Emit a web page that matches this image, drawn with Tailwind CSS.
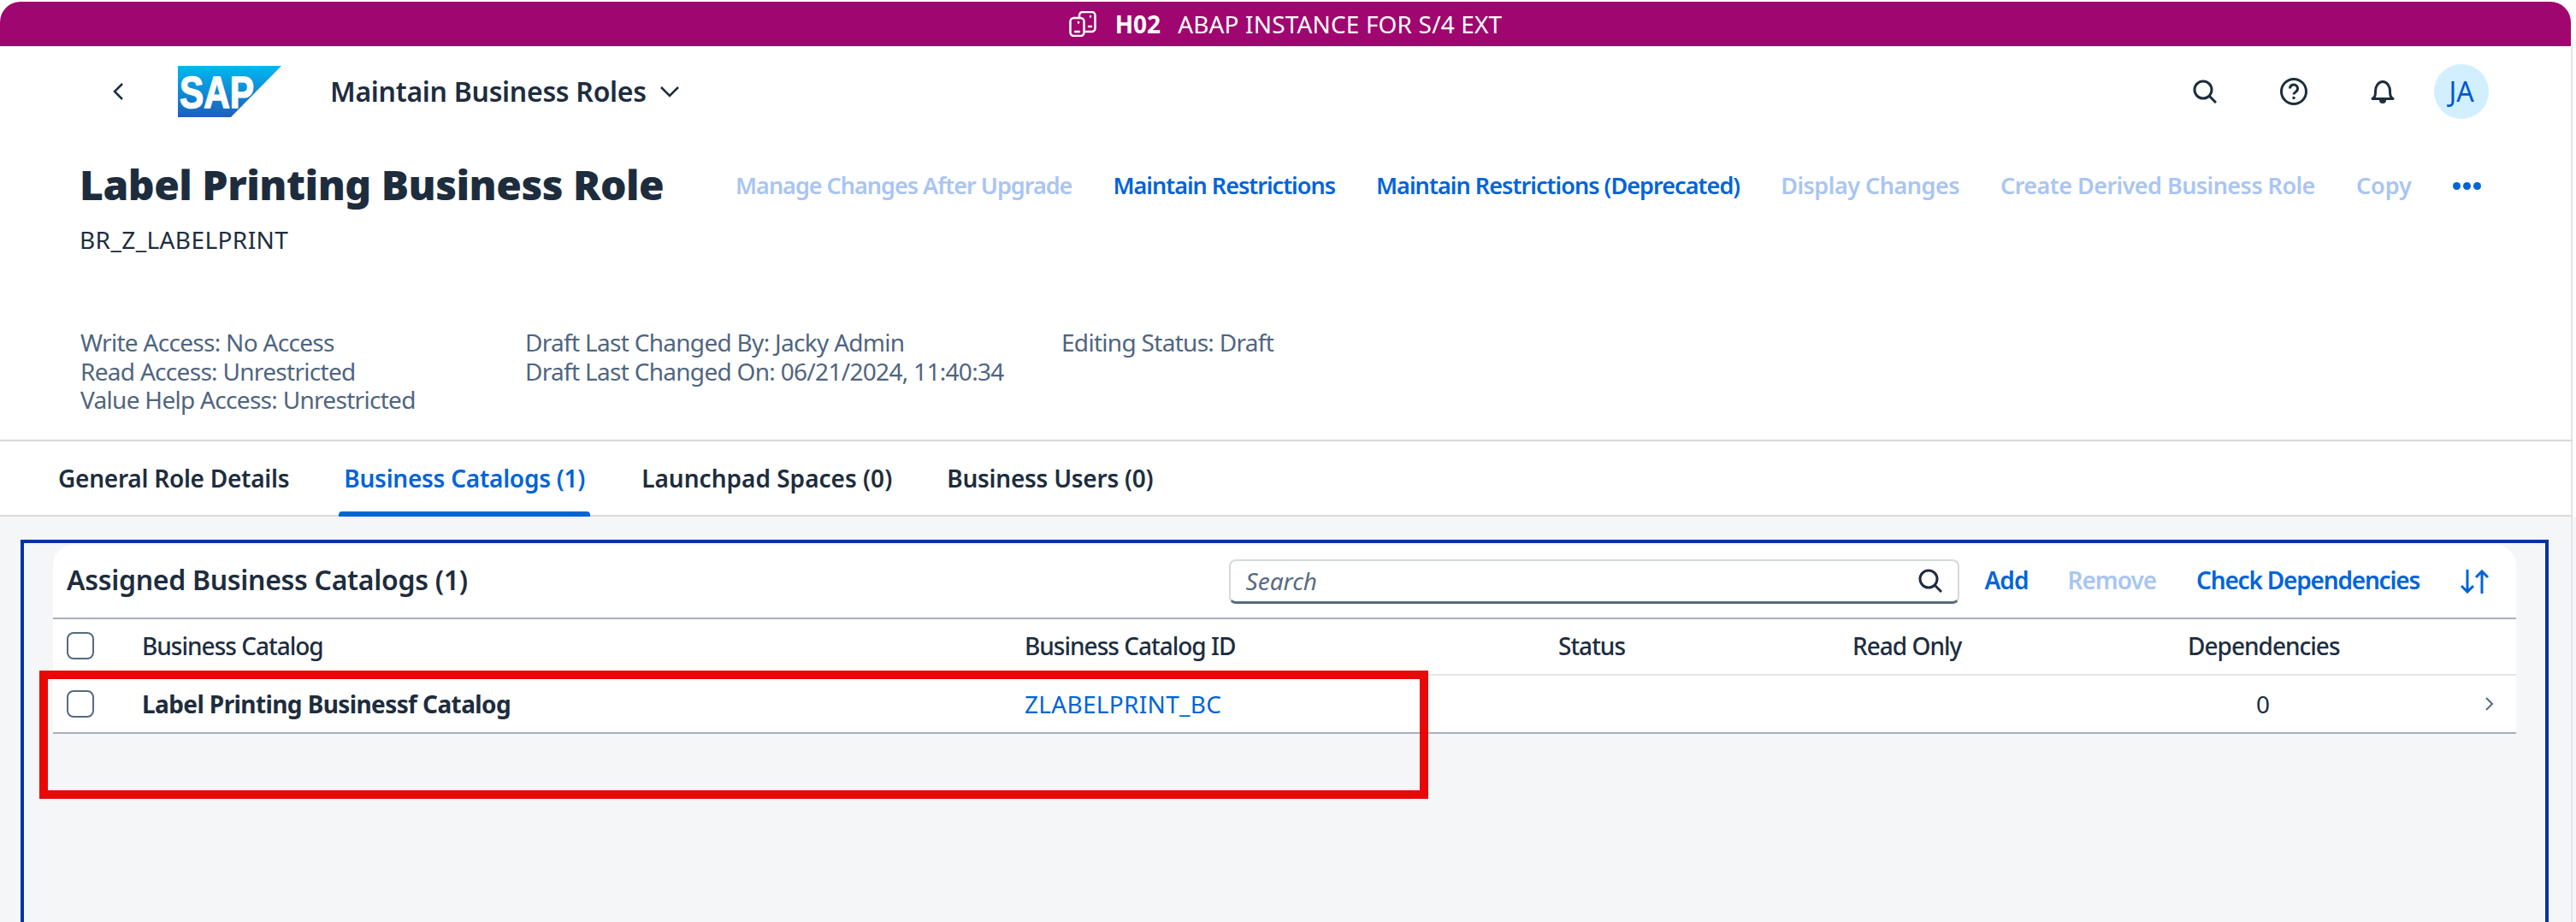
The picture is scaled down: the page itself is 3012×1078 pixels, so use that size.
<!DOCTYPE html>
<html lang="en">
<head>
    <meta charset="UTF-8" />
    <title>Maintain Business Roles</title>
    <script src="https://cdn.jsdelivr.net/npm/@tailwindcss/browser@4"></script>
</head>
<body class="relative h-[1078px] overflow-hidden bg-white pt-[2px] pr-[4px] font-['Noto_Sans',sans-serif] text-[28px] text-[#1d2d3e]">

    <!-- system banner -->
    <div class="mr-[2px] flex h-[52px] items-center justify-center rounded-t-[24px] bg-[#a0066f] text-[28px] text-white">
        <svg class="mr-[22px] h-[30px] w-[32px]" viewBox="0 0 32 30" fill="none" stroke="white" stroke-width="2.5" stroke-linecap="round">
            <rect x="1.500" y="8" width="16" height="21" rx="4" />
            <path d="M12 8V5a4 4 0 0 1 4-4h10.500a4 4 0 0 1 4 4v15a4 4 0 0 1-4 4H18" />
            <path d="M7 24h5M11 13v.5M25 6v.5M23 18h3" />
        </svg>
        <span class="mr-[20px] font-bold">H02</span>
        <span class="tracking-[0.15px]">ABAP INSTANCE FOR S/4 EXT</span>
    </div>

    <!-- shell and object header -->
    <header class="h-[462px] border-r-2 border-b-2 border-r-[#e4e4e4] border-b-[#d9d9d9] bg-white">
        <div class="flex h-[106px] items-center pl-[131px] pr-[96px]">
            <svg class="h-[20px] w-[14px]" viewBox="0 0 14 20" fill="none" stroke="#1d2d3e" stroke-width="2.500"><path d="M12 1 3 10l9 9" /></svg>
            <svg class="ml-[63px] h-[60px] w-[121px]" viewBox="0 0 121 60">
                <defs><linearGradient id="sapGrad" x1="0" y1="0" x2="0" y2="1"><stop offset="0" stop-color="#00b8f1" /><stop offset="1" stop-color="#1e5fbb" /></linearGradient></defs>
                <polygon points="0,0 121,0 62,60 0,60" fill="url(#sapGrad)" />
                <text x="2" y="49" fill="white" stroke="white" stroke-width="1.500" font-family="Liberation Sans" font-weight="700" font-size="52" textLength="87" lengthAdjust="spacingAndGlyphs">SAP</text>
            </svg>
            <span class="ml-[57px] text-[32px] font-semibold tracking-[-0.3px]">Maintain Business Roles</span>
            <svg class="ml-[16px] h-[14px] w-[22px]" viewBox="0 0 22 14" fill="none" stroke="#1d2d3e" stroke-width="2.500"><path d="m1 2 10 10L21 2" /></svg>
            <div class="ml-auto flex items-center">
                <svg class="h-[28px] w-[28px]" viewBox="0 0 28 28" fill="none" stroke="#1d2d3e" stroke-width="3"><circle cx="12" cy="12" r="10" /><path d="m19 19 8 8" /></svg>
                <svg class="ml-[74px] h-[32px] w-[32px]" viewBox="0 0 32 32" fill="none" stroke="#1d2d3e" stroke-width="3"><circle cx="16" cy="16" r="14.500" /><path d="M11.500 12.500a4.500 4.500 0 1 1 7 3.700c-1.600 1-2.500 1.800-2.500 3.300" /><path d="M16 22v3" /></svg>
                <svg class="ml-[74px] h-[28px] w-[28px]" viewBox="0 0 28 28" fill="none" stroke="#1d2d3e" stroke-width="3"><path d="M2 22.500c3-2 3.500-4 3.500-9 0-5.500 3.500-11 8.500-11s8.500 5.500 8.500 11c0 5 .5 7 3.500 9Z" stroke-linejoin="round" /><path d="M10 24h8a4 4 0 0 1-8 0Z" fill="#1d2d3e" stroke="none" /></svg>
                <div class="ml-[46px] flex h-[64px] w-[64px] items-center justify-center rounded-full bg-[#d1efff] text-[32px] text-[#0057d2]">JA</div>
            </div>
        </div>

        <div class="flex items-start pl-[93px] pr-[96px] pt-[26px]">
            <div class="w-[767px]">
                <h1 class="text-[48px] leading-[60px] font-black tracking-[-0.5px]">Label Printing Business Role</h1>
                <p class="mt-[16px] text-[28px] leading-[36px] tracking-[0.4px]">BR_Z_LABELPRINT</p>
            </div>
            <div class="mt-[11px] flex items-center gap-[48px] text-[27px] font-semibold tracking-[-1px] text-[#0064d9]">
                <span class="text-[#a9c5f2]">Manage Changes After Upgrade</span>
                <span>Maintain Restrictions</span>
                <span class="tracking-[-0.95px]">Maintain Restrictions (Deprecated)</span>
                <span class="tracking-[-0.5px] text-[#a9c5f2]">Display Changes</span>
                <span class="tracking-[-0.55px] text-[#a9c5f2]">Create Derived Business Role</span>
                <span class="tracking-normal text-[#a9c5f2]">Copy</span>
                <span class="flex gap-[3px]">
                    <i class="h-[9px] w-[9px] rounded-full bg-[#0064d9]"></i><i class="h-[9px] w-[9px] rounded-full bg-[#0064d9]"></i><i class="h-[9px] w-[9px] rounded-full bg-[#0064d9]"></i>
                </span>
            </div>
        </div>

        <div class="mt-[86px] flex pl-[94px] text-[28px] leading-[33.5px] tracking-[-0.7px] text-[#4f6580]">
            <div class="w-[520px]">
                <p>Write Access: No Access</p>
                <p>Read Access: Unrestricted</p>
                <p>Value Help Access: Unrestricted</p>
            </div>
            <div class="w-[627px]">
                <p>Draft Last Changed By: Jacky Admin</p>
                <p>Draft Last Changed On: 06/21/2024, 11:40:34</p>
            </div>
            <p>Editing Status: Draft</p>
        </div>
    </header>

    <!-- tabs -->
    <nav class="flex h-[88px] gap-[12px] border-r-2 border-b-2 border-r-[#e4e4e4] border-b-[#d9d9d9] bg-white pl-[62px] text-[28px] font-semibold tracking-[-0.25px]">
        <span class="flex items-center px-[6px]">General Role Details</span>
        <span class="relative ml-[40px] flex items-center px-[6px] text-[#0064d9]">Business Catalogs (1)
            <i class="absolute right-0 -bottom-[2px] left-0 h-[6px] rounded-t-[4px] bg-[#0064d9]"></i>
        </span>
        <span class="ml-[42px] flex items-center px-[6px] tracking-normal">Launchpad Spaces (0)</span>
        <span class="ml-[40px] flex items-center px-[6px]">Business Users (0)</span>
    </nav>

    <!-- content -->
    <main class="h-[480px] border-r-2 border-[#e4e4e4] bg-[#f5f6f7] pt-[27px] pl-[24px] pr-[26px] shadow-[4px_0_0_#f5f6f7]">
        <div class="h-[460px] border-x-4 border-t-4 border-[#0033a0] pt-[2px] pl-[34px] pr-[34px]">
            <div class="rounded-t-[24px] bg-white">
                <div class="flex h-[87px] items-center border-b-2 border-[#a8b2bd] pr-[32px] pl-[16px]">
                    <h2 class="mb-[3px] text-[32px] font-semibold tracking-[-0.3px]">Assigned Business Catalogs (1)</h2>
                    <div class="ml-auto flex h-[52px] w-[854px] items-center justify-between rounded-[8px] border-2 border-b-[3px] border-[#d5dadd] border-b-[#556b82] px-[18px]">
                        <span class="text-[28px] italic text-[#556b82]">Search</span>
                        <svg class="h-[28px] w-[28px]" viewBox="0 0 28 28" fill="none" stroke="#1d2d3e" stroke-width="3"><circle cx="12" cy="12" r="10" /><path d="m19 19 8 8" /></svg>
                    </div>
                    <span class="mb-[3px] ml-[30px] font-semibold tracking-[-1px] text-[#0064d9]">Add</span>
                    <span class="mb-[3px] ml-[46px] font-semibold tracking-[-1px] text-[#a9c5f2]">Remove</span>
                    <span class="mb-[3px] ml-[47px] font-semibold tracking-[-1.200px] text-[#0064d9]">Check Dependencies</span>
                    <svg class="ml-[48px] h-[28px] w-[33px]" viewBox="0 0 33 28" fill="none" stroke="#0064d9" stroke-width="3"><path d="M8 0v26M1 19l7 7 7-7M25 28V2M18 9l7-7 7 7" /></svg>
                </div>
                <div class="grid h-[66px] grid-cols-[104px_1032px_624px_344px_392px_176px_1fr] items-center border-b-2 border-[#e5e5e5] pb-[2px] font-medium tracking-[-1px]">
                    <div class="pl-[16px]"><i class="block h-[32px] w-[32px] rounded-[8px] border-2 border-[#556b82]"></i></div>
                    <span>Business Catalog</span>
                    <span>Business Catalog ID</span>
                    <span>Status</span>
                    <span>Read Only</span>
                    <span class="text-center">Dependencies</span>
                </div>
                <div class="grid h-[68px] grid-cols-[104px_1032px_624px_344px_392px_176px_1fr] items-center border-b-2 border-[#a8b2bd]">
                    <div class="pl-[16px]"><i class="block h-[32px] w-[32px] rounded-[8px] border-2 border-[#556b82]"></i></div>
                    <span class="font-bold tracking-[-0.6px]">Label Printing Businessf Catalog</span>
                    <span class="tracking-[0.3px] text-[#0064d9]">ZLABELPRINT_BC</span>
                    <span></span>
                    <span></span>
                    <span class="text-center">0</span>
                    <div class="flex justify-end pr-[26px]">
                        <svg class="h-[20px] w-[11px]" viewBox="0 0 11 20" fill="none" stroke="#556b82" stroke-width="2"><path d="m2 3 7 7-7 7" /></svg>
                    </div>
                </div>
            </div>
        </div>
    </main>

    <!-- annotation drawn over the table -->
    <div class="absolute top-[784px] left-[46px] h-[150px] w-[1624px] border-[10px] border-[#e80808]"></div>
</body>
</html>
